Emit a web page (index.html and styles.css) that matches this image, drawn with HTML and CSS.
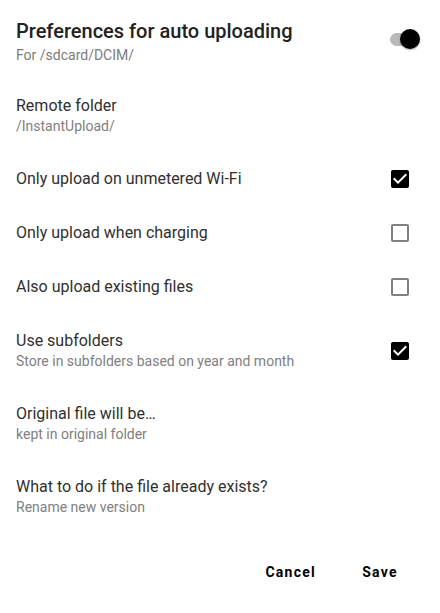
FILE: index.html
```html
<!DOCTYPE html>
<html lang="en">

<head>
    <meta charset="UTF-8">
    <meta name="viewport" content="width=device-width, initial-scale=1.0">
    <title>Auto upload preferences</title>
    <link rel="stylesheet" href="styles.css">
</head>

<body>
    <div class="dialog">
        <!-- Header with master switch -->
        <div class="header">
            <div class="header-text">
                <div class="header-title">Preferences for auto uploading</div>
                <div class="header-sub">For /sdcard/DCIM/</div>
            </div>
            <div class="switch">
                <div class="switch-track"></div>
                <div class="switch-thumb"></div>
            </div>
        </div>

        <!-- Preference rows -->
        <div class="pref">
            <div class="pref-text">
                <div class="pref-title">Remote folder</div>
                <div class="pref-sub">/InstantUpload/</div>
            </div>
        </div>

        <div class="pref">
            <div class="pref-text">
                <div class="pref-title">Only upload on unmetered Wi-Fi</div>
            </div>
            <div class="pref-control">
                <svg class="check on" viewBox="0 0 24 24"><path d="M19 3H5c-1.11 0-2 .9-2 2v14c0 1.1.89 2 2 2h14c1.11 0 2-.9 2-2V5c0-1.1-.89-2-2-2zm-9 14l-5-5 1.41-1.41L10 14.17l7.59-7.59L19 8l-9 9z"/></svg>
            </div>
        </div>

        <div class="pref">
            <div class="pref-text">
                <div class="pref-title">Only upload when charging</div>
            </div>
            <div class="pref-control">
                <svg class="check off" viewBox="0 0 24 24"><path d="M19 5v14H5V5h14m0-2H5c-1.1 0-2 .9-2 2v14c0 1.1.9 2 2 2h14c1.1 0 2-.9 2-2V5c0-1.1-.9-2-2-2z"/></svg>
            </div>
        </div>

        <div class="pref">
            <div class="pref-text">
                <div class="pref-title">Also upload existing files</div>
            </div>
            <div class="pref-control">
                <svg class="check off" viewBox="0 0 24 24"><path d="M19 5v14H5V5h14m0-2H5c-1.1 0-2 .9-2 2v14c0 1.1.9 2 2 2h14c1.1 0 2-.9 2-2V5c0-1.1-.9-2-2-2z"/></svg>
            </div>
        </div>

        <div class="pref">
            <div class="pref-text">
                <div class="pref-title">Use subfolders</div>
                <div class="pref-sub">Store in subfolders based on year and month</div>
            </div>
            <div class="pref-control">
                <svg class="check on" viewBox="0 0 24 24"><path d="M19 3H5c-1.11 0-2 .9-2 2v14c0 1.1.89 2 2 2h14c1.11 0 2-.9 2-2V5c0-1.1-.89-2-2-2zm-9 14l-5-5 1.41-1.41L10 14.17l7.59-7.59L19 8l-9 9z"/></svg>
            </div>
        </div>

        <div class="pref">
            <div class="pref-text">
                <div class="pref-title">Original file will be…</div>
                <div class="pref-sub">kept in original folder</div>
            </div>
        </div>

        <div class="pref">
            <div class="pref-text">
                <div class="pref-title">What to do if the file already exists?</div>
                <div class="pref-sub">Rename new version</div>
            </div>
        </div>

        <!-- Dialog buttons -->
        <div class="actions">
            <button class="action">Cancel</button>
            <button class="action">Save</button>
        </div>
    </div>
</body>

</html>
```

FILE: styles.css
```css
/* Base */
body {
    margin: 0;
    background: #FFFFFF;
    color: #212121;
    font-family: Roboto, 'Noto Sans', sans-serif;
}

.dialog {
    width: 440px;
}

/* Header */
.header {
    display: flex;
    align-items: flex-start;
    padding: 17px 20px 14px 16px;
}

.header-text {
    flex: 1;
}

.header-title {
    font-size: 20px;
    line-height: 28px;
    font-weight: 500;
    color: #222222;
}

.header-sub {
    font-size: 14px;
    line-height: 20px;
    color: #7C7C7C;
}

/* Switch */
.switch {
    display: flex;
    align-items: center;
    margin-top: 12px;
}

.switch-track {
    width: 26px;
    height: 13px;
    border-radius: 7px;
    background: #B9B9B9;
}

.switch-thumb {
    width: 20px;
    height: 20px;
    margin-left: -16px;
    border-radius: 50%;
    background: #000000;
    box-shadow: 0 1px 2px rgba(0, 0, 0, 0.35);
}

/* Preference rows */
.pref {
    display: flex;
    align-items: center;
    padding: 16px 16px;
}

.pref-text {
    flex: 1;
}

.pref-title {
    font-size: 16px;
    line-height: 22px;
    color: #303030;
}

.pref-sub {
    font-size: 14px;
    line-height: 19px;
    color: #808080;
}

.pref-control {
    width: 48px;
    height: 22px;
    display: flex;
    align-items: center;
    justify-content: center;
}

.check {
    width: 24px;
    height: 24px;
    flex-shrink: 0;
    display: block;
}

.check.on {
    fill: #000000;
}

.check.off {
    fill: #808080;
}

/* Buttons */
.actions {
    display: flex;
    justify-content: flex-end;
    gap: 24px;
    padding: 21px 28px 0 0;
}

.action {
    min-width: 64px;
    height: 36px;
    padding: 0 8px;
    border: none;
    background: none;
    font-family: Roboto, 'Noto Sans', sans-serif;
    font-size: 14px;
    font-weight: 700;
    letter-spacing: 1.25px;
    color: #000000;
    cursor: pointer;
}
```
